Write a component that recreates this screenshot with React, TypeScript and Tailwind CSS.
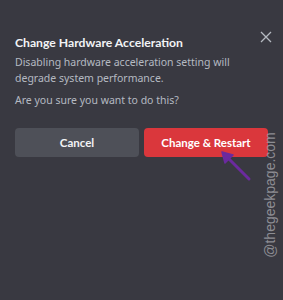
import React from "react";

export default function App() {
  return (
    <div
      className="relative w-[283px] h-[300px] overflow-hidden bg-[#393941]"
      style={{ fontFamily: '"Noto Sans", "Open Sans", sans-serif' }}
    >
      <div className="flex flex-col px-[15px] pt-[32px]">
        <div className="flex items-start justify-between">
          <h1
            className="mt-[2px] text-[12.2px] font-bold leading-[18px] text-[#f2f3f5]"
            style={{ fontFamily: 'Lato, "Noto Sans", sans-serif' }}
          >
            Change Hardware Acceleration
          </h1>
          <svg
            width="14"
            height="14"
            viewBox="0 0 14 14"
            className="mr-[-5px] mt-[-2px] text-[#b5bac1]"
          >
            <path d="M2 2 L12 12 M12 2 L2 12" stroke="currentColor" strokeWidth="1.3" />
          </svg>
        </div>
        <p className="mt-[2px] text-[10.5px] leading-[16px] text-[#b5bac1]">
          Disabling hardware acceleration setting will
          <br />
          degrade system performance.
        </p>
        <p className="mt-[6px] text-[10.5px] leading-[16px] text-[#b5bac1]">
          Are you sure you want to do this?
        </p>
        <div
          className="mt-[20px] flex gap-[5px]"
          style={{ fontFamily: 'Lato, "Noto Sans", sans-serif' }}
        >
          <button className="flex h-[29px] w-[124px] items-center justify-center rounded-[4px] bg-[#4e5058] text-[11.5px] font-bold text-[#f2f3f5]">
            Cancel
          </button>
          <button className="flex h-[29px] w-[124px] items-center justify-center rounded-[4px] bg-[#da373c] text-[11.5px] font-bold text-white">
            Change &amp; Restart
          </button>
        </div>
      </div>
      <svg
        className="absolute left-[218px] top-[148px]"
        width="36"
        height="36"
        viewBox="0 0 36 36"
      >
        <path d="M31 31 L8 8" stroke="#6b2a9e" strokeWidth="3" strokeLinecap="round" />
        <path d="M4 4 L15 7 L7 15 Z" fill="#6b2a9e" stroke="#6b2a9e" strokeWidth="1.5" strokeLinejoin="round" />
      </svg>
      <div
        className="absolute left-[270px] top-[195px] whitespace-nowrap text-[14px] text-[#8d8d93]"
        style={{ transform: "translate(-50%, -50%) rotate(-90deg)", fontFamily: '"Liberation Sans", Arial, sans-serif' }}
      >
        @thegeekpage.com
      </div>
    </div>
  );
}
